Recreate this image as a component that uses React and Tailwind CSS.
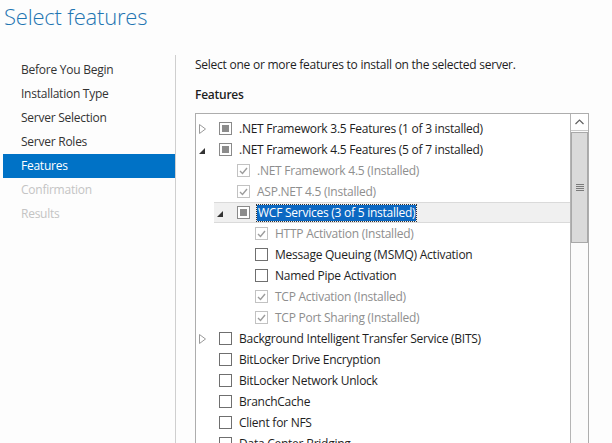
import React from 'react'

const navItems = [
  { label: 'Before You Begin', state: 'done' },
  { label: 'Installation Type', state: 'done' },
  { label: 'Server Selection', state: 'done' },
  { label: 'Server Roles', state: 'done' },
  { label: 'Features', state: 'active' },
  { label: 'Confirmation', state: 'disabled' },
  { label: 'Results', state: 'disabled' },
]

// level, expander, checkbox, label
const features = [
  { level: 0, exp: 'closed', box: 'partial', label: '.NET Framework 3.5 Features (1 of 3 installed)' },
  { level: 0, exp: 'open', box: 'partial', label: '.NET Framework 4.5 Features (5 of 7 installed)' },
  { level: 1, box: 'installed', label: '.NET Framework 4.5 (Installed)' },
  { level: 1, box: 'installed', label: 'ASP.NET 4.5 (Installed)' },
  { level: 1, exp: 'open', box: 'partial', label: 'WCF Services (3 of 5 installed)', selected: true },
  { level: 2, box: 'installed', label: 'HTTP Activation (Installed)' },
  { level: 2, box: 'empty', label: 'Message Queuing (MSMQ) Activation' },
  { level: 2, box: 'empty', label: 'Named Pipe Activation' },
  { level: 2, box: 'installed', label: 'TCP Activation (Installed)' },
  { level: 2, box: 'installed', label: 'TCP Port Sharing (Installed)' },
  { level: 0, exp: 'closed', box: 'empty', label: 'Background Intelligent Transfer Service (BITS)' },
  { level: 0, box: 'empty', label: 'BitLocker Drive Encryption' },
  { level: 0, box: 'empty', label: 'BitLocker Network Unlock' },
  { level: 0, box: 'empty', label: 'BranchCache' },
  { level: 0, box: 'empty', label: 'Client for NFS' },
  { level: 0, box: 'empty', label: 'Data Center Bridging' },
]

const indent = ['pl-0', 'pl-[18px]', 'pl-[36px]']

function Expander({ type }) {
  if (type === 'closed') {
    return (
      <svg width="8" height="10" viewBox="0 0 8 10" className="ml-[3px]">
        <path d="M0.5 0.5 L6.5 5 L0.5 9.5 Z" fill="none" stroke="#9a9a9a" strokeWidth="1" />
      </svg>
    )
  }
  if (type === 'open') {
    return (
      <svg width="7" height="7" viewBox="0 0 7 7" className="ml-[3px] mt-[3px]">
        <path d="M6 0 L6 6 L0 6 Z" fill="#333333" />
      </svg>
    )
  }
  return null
}

function Checkbox({ type }) {
  if (type === 'partial') {
    return (
      <div className="w-[13px] h-[13px] border border-[#8a8a8a] bg-white p-[2px]">
        <div className="w-full h-full bg-[#8c8c8c]" />
      </div>
    )
  }
  if (type === 'installed') {
    return (
      <div className="w-[13px] h-[13px] border border-[#c2c2c2] bg-white flex items-center justify-center">
        <svg width="9" height="8" viewBox="0 0 9 8">
          <path d="M1 4 L3.5 6.5 L8 1" fill="none" stroke="#9c9c9c" strokeWidth="1.4" />
        </svg>
      </div>
    )
  }
  return <div className="w-[13px] h-[13px] border border-[#6f6f6f] bg-white" />
}

function FeatureRow({ item }) {
  const muted = item.box === 'installed'
  return (
    <div className={`${indent[item.level]} h-[21px] flex`}>
      <div
        className={`flex-1 flex items-center ${
          item.selected ? 'bg-[#f0f0f0] border-y border-[#dadada]' : ''
        }`}
      >
        <div className="w-[23px] flex items-center">
          <Expander type={item.exp} />
        </div>
        <Checkbox type={item.box} />
        <span
          className={`ml-[7px] whitespace-nowrap leading-[16px] ${
            item.selected
              ? 'bg-[#0c68c2] text-white px-[1px] -ml-[1px] outline outline-1 outline-dotted outline-[#333]'
              : muted
              ? 'text-[#8e8e8e]'
              : 'text-[#1e1e1e]'
          }`}
        >
          {item.label}
        </span>
      </div>
    </div>
  )
}

function ScrollBar() {
  return (
    <div className="w-[18px] shrink-0 border-l border-[#b4b4b4] flex flex-col bg-[#fbfbfb]">
      <div className="h-[17px] flex items-center justify-center bg-white border-b border-[#c8c8c8]">
        <svg width="9" height="6" viewBox="0 0 9 6">
          <path d="M0.5 5 L4.5 1 L8.5 5" fill="none" stroke="#606060" strokeWidth="1.2" />
        </svg>
      </div>
      <div className="mt-[1px] h-[111px] bg-[#dadada] border border-[#a8a8a8] flex items-center justify-center">
        <svg width="8" height="8" viewBox="0 0 8 8">
          <rect x="0" y="0" width="8" height="1" fill="#7a7a7a" />
          <rect x="0" y="2" width="8" height="1" fill="#7a7a7a" />
          <rect x="0" y="4" width="8" height="1" fill="#7a7a7a" />
          <rect x="0" y="6" width="8" height="1" fill="#7a7a7a" />
        </svg>
      </div>
    </div>
  )
}

export default function App() {
  return (
    <div
      className="w-[612px] h-[443px] overflow-hidden bg-[#fdfdfd] text-[12px] tracking-[-0.25px]"
      style={{ fontFamily: '"Open Sans", "Noto Sans", sans-serif' }}
    >
      <div className="h-[55px] pl-[4px] pt-[2px]">
        <h1 className="text-[22px] font-light leading-[28px] tracking-[-0.2px] text-[#1f75b2]">
          Select features
        </h1>
      </div>
      <div className="flex h-[388px]">
        <nav className="w-[175px] pl-[3px] pt-[3px]">
          {navItems.map((n) => (
            <div
              key={n.label}
              className={`h-[24px] pl-[18px] flex items-center ${
                n.state === 'active'
                  ? 'bg-[#0072c6] text-white'
                  : n.state === 'disabled'
                  ? 'text-[#c4c4c4]'
                  : 'text-[#333333]'
              }`}
            >
              {n.label}
            </div>
          ))}
        </nav>
        <div className="w-px bg-[#cfcfcf]" />
        <main className="flex-1 pl-[19px] pr-[23px]">
          <p className="mt-[1px] h-[18px] leading-[18px] text-[#1e1e1e]">
            Select one or more features to install on the selected server.
          </p>
          <h2 className="mt-[12px] h-[18px] leading-[18px] font-semibold text-[#1e1e1e]">Features</h2>
          <div className="mt-[9px] h-[400px] border border-[#adadad] bg-white flex">
            <div className="flex-1 pt-[4px] overflow-hidden">
              {features.map((f) => (
                <FeatureRow key={f.label} item={f} />
              ))}
            </div>
            <ScrollBar />
          </div>
        </main>
      </div>
    </div>
  )
}
